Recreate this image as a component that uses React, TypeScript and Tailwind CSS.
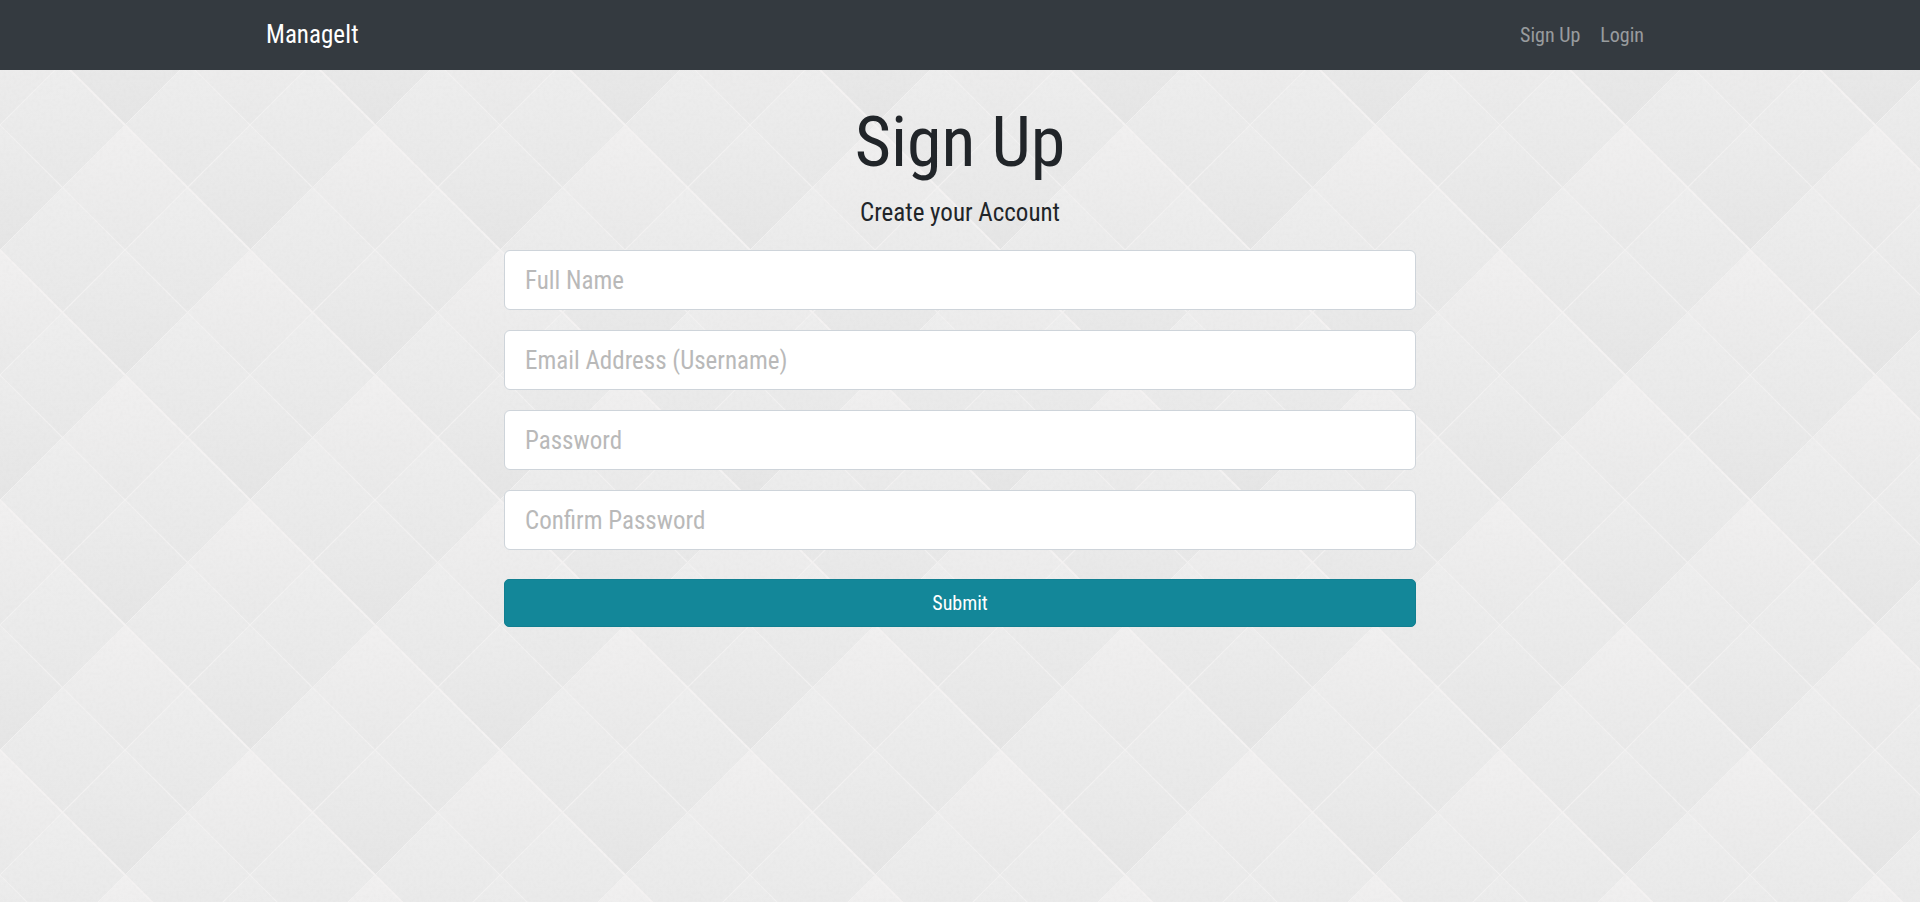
import React from "react";

const origins = [
  [125, -125],
  [0, 0],
  [250, 0],
  [125, 125],
];

function DiamondBackground() {
  return (
    <svg aria-hidden="true" className="absolute inset-0 -z-10 h-full w-full">
      <defs>
        <linearGradient id="light" x1="0" y1="0" x2="0" y2="1">
          <stop offset="0" stopColor="#f1f0f0" />
          <stop offset="1" stopColor="#e9e9e9" />
        </linearGradient>
        <linearGradient id="mid" x1="0" y1="0" x2="0" y2="1">
          <stop offset="0" stopColor="#eeeeee" />
          <stop offset="1" stopColor="#e8e8e8" />
        </linearGradient>
        <linearGradient id="dark" x1="0" y1="0" x2="0" y2="1">
          <stop offset="0" stopColor="#ededed" />
          <stop offset="1" stopColor="#e5e5e5" />
        </linearGradient>
        <g id="cell">
          <path d="M0 0 62.5 62.5 0 125 -62.5 62.5Z" fill="url(#light)" />
          <path d="M-62.5 62.5 0 125 -62.5 187.5 -125 125Z" fill="url(#mid)" />
          <path d="M62.5 62.5 125 125 62.5 187.5 0 125Z" fill="url(#mid)" />
          <path d="M0 125 62.5 187.5 0 250 -62.5 187.5Z" fill="url(#dark)" />
        </g>
        <g id="seams" fill="none">
          <path d="M-62.5 62.5 62.5 187.5M62.5 62.5-62.5 187.5" stroke="#f2f1f1" strokeWidth="1.2" />
          <path d="M0 0-125 125" stroke="#f2f1f1" strokeWidth="1" />
          <path d="M0 0 125 125" stroke="#f4f2f2" strokeWidth="2" />
        </g>
        <pattern id="diamonds" width="250" height="250" patternUnits="userSpaceOnUse">
          {origins.map(([x, y]) => (
            <use key={`cell-${x}-${y}`} href="#cell" x={x} y={y} />
          ))}
          {origins.map(([x, y]) => (
            <use key={`seam-${x}-${y}`} href="#seams" x={x} y={y} />
          ))}
        </pattern>
        <filter id="paper" x="0" y="0" width="100%" height="100%">
          <feTurbulence type="fractalNoise" baseFrequency="0.3" numOctaves="2" seed="4" stitchTiles="stitch" />
          <feColorMatrix type="matrix" values="0 0 0 0 0.5  0 0 0 0 0.5  0 0 0 0 0.5  0.12 0 0 0 -0.048" />
        </filter>
      </defs>
      <rect width="100%" height="100%" fill="url(#diamonds)" />
      <rect width="100%" height="100%" filter="url(#paper)" />
    </svg>
  );
}

const fields = [
  { id: "fullName", type: "text", label: "Full Name" },
  { id: "username", type: "email", label: "Email Address (Username)" },
  { id: "password", type: "password", label: "Password" },
  { id: "confirmPassword", type: "password", label: "Confirm Password" },
];

export default function App() {
  return (
    <div className="relative isolate min-h-screen font-['Roboto_Condensed','Liberation_Sans_Narrow',Roboto,sans-serif] text-[#212529]">
      <DiamondBackground />
      <nav className="bg-[#343a40]">
        <div className="mx-auto flex h-[70px] max-w-[1428px] items-center justify-between px-5">
          <a href="#home" className="text-[25px] leading-[38px] text-white">
            ManageIt
          </a>
          <div className="flex text-[20px] text-white/50">
            <a href="#signup" className="px-2.5">
              Sign Up
            </a>
            <a href="#login" className="px-2.5">
              Login
            </a>
          </div>
        </div>
      </nav>
      <main className="mx-auto max-w-[912px] pt-[30px]">
        <h1 className="text-center text-[70px] leading-[84px]">Sign Up</h1>
        <p className="mt-2.5 text-center text-[25px] leading-[38px]">Create your Account</p>
        <form className="mt-[18px] flex flex-col">
          <div className="flex flex-col gap-5">
            {fields.map((field) => (
              <input
                key={field.id}
                id={field.id}
                name={field.id}
                type={field.type}
                aria-label={field.label}
                placeholder={field.label}
                className="h-[60px] w-full rounded-md border border-[#ced4da] bg-white px-5 text-[25px] placeholder:text-[#b9b9b9]"
              />
            ))}
          </div>
          <button
            type="submit"
            className="mt-[29px] h-12 rounded-[5px] border border-[#117f91] bg-[#138799] text-[20px] text-white"
          >
            Submit
          </button>
        </form>
      </main>
    </div>
  );
}
